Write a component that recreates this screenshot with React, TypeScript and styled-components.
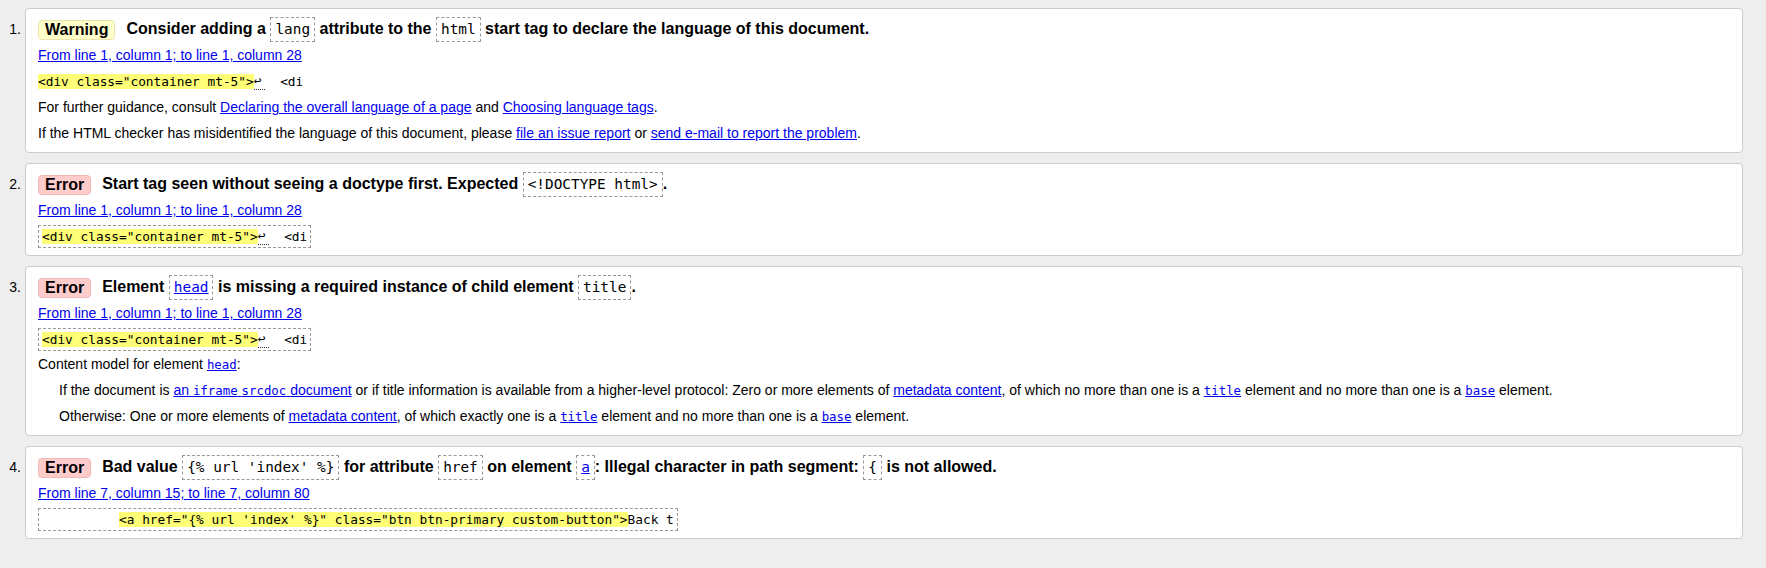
import React from "react";
import styled, { createGlobalStyle } from "styled-components";

const GlobalStyle = createGlobalStyle`
  html, body {
    margin: 0;
    padding: 0;
    background: #eee;
  }
  body {
    font-family: "Liberation Sans", Arial, sans-serif;
    font-size: 14px;
    color: #000;
  }
`;

const mono = `"DejaVu Sans Mono", "Liberation Mono", monospace`;

const Results = styled.ol`
  list-style: none;
  margin: 0;
  padding: 8px 23px 8px 0;
  display: flex;
  flex-direction: column;
  gap: 10px;
`;

const Item = styled.li`
  display: flex;
  align-items: flex-start;
`;

const Num = styled.span`
  flex: none;
  width: 25px;
  box-sizing: border-box;
  padding: 8px 4px 0 0;
  text-align: right;
  line-height: 26px;
  font-size: 14px;
`;

const Card = styled.div`
  flex: 1;
  min-width: 0;
  background: #fff;
  border: 1px solid #ccc;
  border-radius: 4px;
  padding: 7px 12px 6px 12px;
`;

const Message = styled.div`
  height: 26px;
  line-height: 26px;
  font-size: 16px;
  font-weight: bold;
  white-space: nowrap;
`;

const Badge = styled.span<{ $kind: "error" | "warning" }>`
  display: inline-block;
  box-sizing: border-box;
  height: 20px;
  line-height: 18px;
  padding: 0 6px;
  margin-right: 11px;
  border-radius: 4px;
  vertical-align: middle;
  border: 1px solid ${(p) => (p.$kind === "error" ? "#f0b7b7" : "#e9e4a8")};
  background: ${(p) => (p.$kind === "error" ? "#fcc" : "#ffc")};
`;

const Code = styled.code`
  display: inline-block;
  font-family: ${mono};
  font-size: 14.4px;
  font-weight: normal;
  line-height: 23px;
  padding: 0 4px;
  border: 1px dashed #999;
  vertical-align: middle;
`;

const Row = styled.div<{ $h?: number; $indent?: boolean }>`
  height: ${(p) => p.$h ?? 26}px;
  line-height: ${(p) => p.$h ?? 26}px;
  padding-left: ${(p) => (p.$indent ? 21 : 0)}px;
  white-space: nowrap;
`;

const Link = styled.a`
  color: #00e;
  text-decoration: underline;
  cursor: pointer;
`;

const LinkCode = styled.code`
  font-family: ${mono};
  font-size: 12.4px;
`;

const ExtractRow = styled.div`
  height: 26px;
  display: flex;
  align-items: center;
`;

const Extract = styled.code<{ $boxed?: boolean }>`
  display: inline-block;
  font-family: ${mono};
  font-size: 12.8px;
  line-height: 17px;
  white-space: pre;
  padding: ${(p) => (p.$boxed ? "2px 3px" : "0")};
  border: ${(p) => (p.$boxed ? "1px dashed #999" : "none")};
`;

const Mark = styled.b`
  font-weight: normal;
  background: #ff7;
`;

const Newline = styled.span`
  display: inline-block;
  width: 11px;
  height: 16px;
  line-height: 16px;
  vertical-align: top;
  border-bottom: 1px dotted #333;
  overflow: hidden;
`;

const FirstLine = () => (
  <>
    <Mark>{'<div class="container mt-5">'}</Mark>
    <Newline>↩</Newline>
    {"  <di"}
  </>
);

export default function App() {
  return (
    <>
      <GlobalStyle />
      <Results>
        <Item>
          <Num>1.</Num>
          <Card>
            <Message>
              <Badge $kind="warning">Warning</Badge>
              <span>
                Consider adding a <Code>lang</Code> attribute to the <Code>html</Code> start tag to
                declare the language of this document.
              </span>
            </Message>
            <Row>
              <Link>From line 1, column 1; to line 1, column 28</Link>
            </Row>
            <ExtractRow>
              <Extract>
                <FirstLine />
              </Extract>
            </ExtractRow>
            <Row>
              For further guidance, consult <Link>Declaring the overall language of a page</Link> and{" "}
              <Link>Choosing language tags</Link>.
            </Row>
            <Row>
              If the HTML checker has misidentified the language of this document, please{" "}
              <Link>file an issue report</Link> or <Link>send e-mail to report the problem</Link>.
            </Row>
          </Card>
        </Item>

        <Item>
          <Num>2.</Num>
          <Card>
            <Message>
              <Badge $kind="error">Error</Badge>
              <span>
                Start tag seen without seeing a doctype first. Expected <Code>{"<!DOCTYPE html>"}</Code>.
              </span>
            </Message>
            <Row>
              <Link>From line 1, column 1; to line 1, column 28</Link>
            </Row>
            <ExtractRow>
              <Extract $boxed>
                <FirstLine />
              </Extract>
            </ExtractRow>
          </Card>
        </Item>

        <Item>
          <Num>3.</Num>
          <Card>
            <Message>
              <Badge $kind="error">Error</Badge>
              <span>
                Element{" "}
                <Code>
                  <Link>head</Link>
                </Code>{" "}
                is missing a required instance of child element <Code>title</Code>.
              </span>
            </Message>
            <Row>
              <Link>From line 1, column 1; to line 1, column 28</Link>
            </Row>
            <ExtractRow>
              <Extract $boxed>
                <FirstLine />
              </Extract>
            </ExtractRow>
            <Row $h={25}>
              Content model for element{" "}
              <Link>
                <LinkCode>head</LinkCode>
              </Link>
              :
            </Row>
            <Row $indent>
              If the document is{" "}
              <Link>
                an <LinkCode>iframe</LinkCode> <LinkCode>srcdoc</LinkCode> document
              </Link>{" "}
              or if title information is available from a higher-level protocol: Zero or more elements of{" "}
              <Link>metadata content</Link>, of which no more than one is a{" "}
              <Link>
                <LinkCode>title</LinkCode>
              </Link>{" "}
              element and no more than one is a{" "}
              <Link>
                <LinkCode>base</LinkCode>
              </Link>{" "}
              element.
            </Row>
            <Row $indent>
              Otherwise: One or more elements of <Link>metadata content</Link>, of which exactly one is a{" "}
              <Link>
                <LinkCode>title</LinkCode>
              </Link>{" "}
              element and no more than one is a{" "}
              <Link>
                <LinkCode>base</LinkCode>
              </Link>{" "}
              element.
            </Row>
          </Card>
        </Item>

        <Item>
          <Num>4.</Num>
          <Card>
            <Message>
              <Badge $kind="error">Error</Badge>
              <span>
                Bad value <Code>{"{% url 'index' %}"}</Code> for attribute <Code>href</Code> on element{" "}
                <Code>
                  <Link>a</Link>
                </Code>
                : Illegal character in path segment: <Code>{"{"}</Code> is not allowed.
              </span>
            </Message>
            <Row>
              <Link>From line 7, column 15; to line 7, column 80</Link>
            </Row>
            <ExtractRow>
              <Extract $boxed>
                {"          "}
                <Mark>{`<a href="{% url 'index' %}" class="btn btn-primary custom-button">`}</Mark>
                {"Back t"}
              </Extract>
            </ExtractRow>
          </Card>
        </Item>
      </Results>
    </>
  );
}
